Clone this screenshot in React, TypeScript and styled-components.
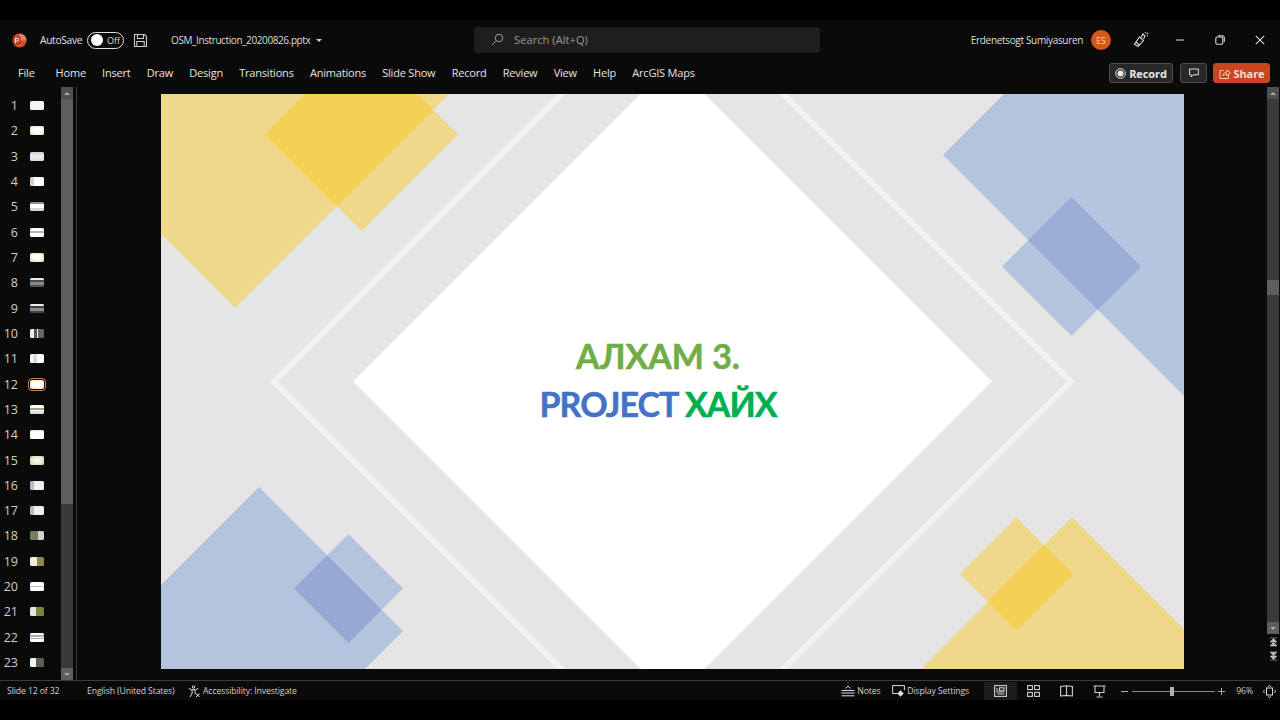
import React from "react";
import styled, { createGlobalStyle } from "styled-components";

const Global = createGlobalStyle`
  html, body { margin: 0; padding: 0; background: #000; }
  body { font-family: "Open Sans", "Noto Sans", sans-serif; overflow: hidden; }
  svg { display: block; flex: none; }
`;

const Page = styled.div`
  width: 1280px; height: 720px; background: #000; padding: 20px 0; box-sizing: border-box;
`;
const Win = styled.div`
  height: 680px; background: #0a0a0a; color: #e6e6e6; display: flex; flex-direction: column;
`;
const TitleBar = styled.header`
  height: 40px; flex: none; display: flex; align-items: center;
`;
const TitleLeft = styled.div`
  width: 474px; flex: none; display: flex; align-items: center; padding-left: 12px; box-sizing: border-box;
`;
const AutoSave = styled.span`
  font-size: 10.2px; margin-left: 13px; color: #e2e2e2; letter-spacing: -0.3px; width: 42px; white-space: nowrap;
`;
const Toggle = styled.span`
  width: 37px; height: 17px; box-sizing: border-box; margin-left: 5px; border: 1.3px solid #e0e0e0; border-radius: 9px;
  display: flex; align-items: center; padding-left: 3px; gap: 4px; font-size: 9px; color: #ddd;
`;
const Knob = styled.span`
  width: 12px; height: 12px; border-radius: 50%; background: #fff;
`;
const SaveBtn = styled.span`
  margin-left: 9px; color: #ccc;
`;
const FileName = styled.span`
  margin-left: 23px; font-size: 10px; color: #dcdcdc; letter-spacing: -0.4px; white-space: nowrap;
`;
const Caret = styled.span`
  margin-left: 6px; width: 0; height: 0; border-left: 3px solid transparent; border-right: 3px solid transparent; border-top: 3px solid #ccc;
`;
const Search = styled.div`
  width: 346px; height: 26px; flex: none; background: #1e1e1e; border-radius: 3px; display: flex; align-items: center;
  padding: 0 0 2px 17px; box-sizing: border-box; color: #9a9a9a; font-size: 11.2px; gap: 10px;
`;
const TitleRight = styled.div`
  flex: 1; display: flex; align-items: center; justify-content: flex-end; min-width: 0;
`;
const UserName = styled.span`
  font-size: 10px; color: #dedede; letter-spacing: -0.33px; white-space: nowrap;
`;
const Avatar = styled.span`
  width: 20px; height: 20px; border-radius: 50%; background: #d15a16; color: #f4d8c4; font-size: 8.5px;
  display: flex; align-items: center; justify-content: center; margin: 0 20px 0 8px;
`;
const WinBtn = styled.span`
  width: 40px; display: flex; justify-content: center; color: #ddd;
`;
const PenSlot = styled.span`
  width: 20px; display: flex; justify-content: center; margin-right: 9px; color: #ddd;
`;
const Ribbon = styled.nav`
  height: 27px; flex: none; display: flex; align-items: center; padding: 0 10px 1px 18px; box-sizing: border-box;
`;
const Tab = styled.span<{ $file?: boolean }>`
  font-size: 11px; letter-spacing: -0.2px; color: #e4e4e4; margin: 0 ${(p) => (p.$file ? 21 : 16.2)}px 2px 0; white-space: nowrap;
`;
const RibbonActions = styled.div`
  margin-left: auto; display: flex; align-items: center; gap: 7px;
`;
const ActionBtn = styled.span<{ $w: number }>`
  height: 20px; width: ${(p) => p.$w}px; box-sizing: border-box; border: 1px solid #4f4f4f; background: #282828; border-radius: 3px;
  display: flex; align-items: center; justify-content: center; gap: 3px; font-size: 11px; font-weight: 700; color: #e8e8e8; letter-spacing: -0.1px;
`;
const ShareBtn = styled(ActionBtn)`
  background: #c8451f; border-color: #c8451f; color: #f6dfd6; margin-left: -1px;
`;
const Main = styled.main`
  flex: 1; min-height: 0; display: flex; border-bottom: 1px solid #3c3c3c;
`;
const Sidebar = styled.aside`
  width: 77px; flex: none; display: flex; box-sizing: border-box; border-right: 1px solid #3c3c3c;
`;
const SlideList = styled.div`
  width: 61px; flex: none; padding-top: 6px; box-sizing: border-box;
`;
const SlideRow = styled.div`
  height: 25.32px; display: flex; align-items: center;
`;
const SlideNum = styled.span`
  width: 18px; text-align: right; font-size: 12.5px; color: #cfcfcf; flex: none;
`;
const ThumbSlot = styled.span`
  flex: none; display: flex; padding-left: 12px;
`;
const Thumb = styled.span<{ $fill: string; $active?: boolean }>`
  width: 14px; height: 9px; border-radius: 1.5px; background: ${(p) => p.$fill};
  ${(p) => p.$active && "outline: 1.5px solid #c4796a; outline-offset: 1px; border-radius: 2px;"}
`;
const ScrollTrack = styled.div`
  width: 12px; flex: none; background: #3a3a3a; display: flex; flex-direction: column;
`;
const ScrollBtn = styled.span<{ $up?: boolean; $tone?: string }>`
  height: 12px; flex: none; background: ${(p) => p.$tone ?? "#505050"}; display: flex; align-items: center; justify-content: center;
  &::after {
    content: ""; width: 0; height: 0; border-left: 3.5px solid transparent; border-right: 3.5px solid transparent;
    ${(p) => (p.$up ? "border-bottom: 3px solid #a8a8a8;" : "border-top: 3px solid #a8a8a8;")}
  }
`;
const ScrollThumb = styled.span<{ $h: number; $tone?: string }>`
  height: ${(p) => p.$h}px; flex: none; background: ${(p) => p.$tone ?? "#5e5e5e"};
`;
const ScrollFill = styled.span`
  flex: 1;
`;
const ScrollGap = styled.span<{ $h: number }>`
  height: ${(p) => p.$h}px; flex: none;
`;
const Canvas = styled.section`
  flex: 1; min-width: 0; padding: 7px 0 0 84px; box-sizing: border-box;
`;
const Slide = styled.div`
  width: 1023px; height: 575px; display: grid; background: #e6e5e6;
  & > * { grid-area: 1 / 1; }
`;
const SlideText = styled.div`
  display: flex; flex-direction: column; align-items: center; justify-content: center; padding: 0 29px 4px 0;
  font-family: "Lato", "Open Sans", sans-serif; font-weight: 700; font-size: 34px; line-height: 48px; white-space: nowrap;
  -webkit-text-stroke: 0.5px currentColor;
`;
const Heading = styled.span`
  color: #70ad47;
`;
const SubHeading = styled.span`
  color: #4472c4; letter-spacing: -0.9px;
`;
const Accent = styled.span`
  color: #00b050;
`;
const RightRail = styled.div`
  width: 13px; flex: none; display: flex; flex-direction: column; box-sizing: border-box; padding-right: 1px;
`;
const RailScroll = styled(ScrollTrack)`
  height: 547px; flex: none;
`;
const RailNav = styled.div`
  display: flex; flex-direction: column; align-items: center; gap: 4px; margin-top: 3px; color: #b8b8b8;
`;
const StatusBar = styled.footer`
  height: 18px; margin-top: 1px; flex: none; display: flex; align-items: center; font-size: 8.7px; letter-spacing: -0.12px; color: #d0d0d0; padding-left: 7px; white-space: nowrap;
`;
const StatusItem = styled.span<{ $w?: number }>`
  display: flex; align-items: center; gap: 2px; ${(p) => (p.$w ? `width: ${p.$w}px; flex: none;` : "")}
`;
const StatusRight = styled.div`
  margin-left: auto; display: flex; align-items: center; height: 100%;
`;
const ViewBtn = styled.span<{ $active?: boolean }>`
  width: 33px; height: 100%; display: flex; align-items: center; justify-content: center; color: #cfcfcf;
  background: ${(p) => (p.$active ? "#1d1d1d" : "transparent")};
`;
const Zoom = styled.div`
  display: flex; align-items: center; margin-left: 5px; color: #a8a8a8;
`;
const ZoomTrack = styled.span`
  width: 83px; height: 1px; background: #8a8a8a; margin: 0 3px 0 4px; display: flex; align-items: center; padding-left: 38px; box-sizing: border-box;
`;
const ZoomThumb = styled.span`
  width: 4px; height: 9px; background: #b0b0b0; flex: none;
`;
const ZoomPct = styled.span`
  margin-left: 11px; color: #c8c8c8;
`;
const FitSlot = styled.span`
  margin: 0 4px 0 10px; color: #d8d8d8;
`;

const W = "#f4f4f4";
const thumbs: string[] = [
  W,
  "radial-gradient(#fff 35%, #dcdbb0 100%)",
  "linear-gradient(#cfcfcf, #eee 50%, #d8d8d8)",
  "linear-gradient(90deg, #d4d4d4 0 30%, #fff 30%)",
  "linear-gradient(#8f8fa4 0 22%, #fff 22% 70%, #d4d4d4 70%)",
  "linear-gradient(#fff 30%, #b4b4b4 30% 55%, #fff 55%)",
  "radial-gradient(#fff 35%, #d6d7a0 100%)",
  "linear-gradient(#eee 0 25%, #4c4c4c 25% 45%, #8a8a8a 45% 75%, #555 75%)",
  "linear-gradient(#eee 0 20%, #3e3e3e 20% 40%, #8a8a8a 40% 75%, #444 75%)",
  "linear-gradient(90deg, #eee 0 30%, #555 30% 50%, #eee 50% 60%, #666 60%)",
  "linear-gradient(90deg, #fff 0 20%, #dcdcdc 20% 50%, #fff 50%)",
  "radial-gradient(#fff 35%, #efdca0 100%)",
  "linear-gradient(#fff 0 30%, #a5a58a 30% 50%, #fff 50% 70%, #ddd 70%)",
  "linear-gradient(#f4dede, #fff 25%)",
  "radial-gradient(#f6f6e8 25%, #c9cca6 100%)",
  "linear-gradient(90deg, #bbb 0 30%, #eee 30%)",
  "linear-gradient(90deg, #bbb 0 30%, #eee 30%)",
  "linear-gradient(90deg, #7b7a60 0 60%, #cfcfcf 60%)",
  "linear-gradient(90deg, #f0f0d8 0 50%, #8c8a4c 50%)",
  "linear-gradient(#fff 40%, #b8b8b8 40% 55%, #fff 55%)",
  "linear-gradient(90deg, #e8e8d8 0 45%, #7c8240 45%)",
  "linear-gradient(#fff 25%, #aaa 25% 40%, #fff 40% 60%, #aaa 60% 72%, #fff 72%)",
  "linear-gradient(90deg, #f4f4f4 0 45%, #5e5e55 45%)",
];

const tabs = ["Home", "Insert", "Draw", "Design", "Transitions", "Animations", "Slide Show", "Record", "Review", "View", "Help", "ArcGIS Maps"];

const diamond = (cx: number, cy: number, r: number) =>
  `${cx - r},${cy} ${cx},${cy - r} ${cx + r},${cy} ${cx},${cy + r}`;

const SlideArt = () => (
  <svg width="1023" height="575" viewBox="161 94 1023 575">
    <polygon points={diamond(672.5, 381.5, 398.5)} fill="none" stroke="#f1f1f1" strokeWidth="6" />
    <polygon points={diamond(672.5, 381.5, 319.5)} fill="#fff" />
    <polygon points="161,94 449,94 235,308 161,234" fill="#eed98a" />
    <polygon points={diamond(361.5, 134.5, 96.5)} fill="#eed98a" />
    <polygon points="305.5,94 417.5,94 433.25,109.75 336.75,206.25 265,134.5" fill="#f4d056" />
    <polygon points="1004,94 1184,94 1184,396 943,155" fill="#b5c4de" />
    <polygon points={diamond(1071.5, 266.5, 69.5)} fill="#b5c4de" />
    <polygon points="1071.5,197 1141,266.5 1097.75,309.75 1028.25,240.25" fill="#9aadd5" />
    <polygon points="161,585 259,487 403,631 365,669 161,669" fill="#b5c4de" />
    <polygon points={diamond(348.5, 588.5, 54.5)} fill="#b5c4de" />
    <polygon points="327.25,555.25 381.75,609.75 348.5,643 294,588.5" fill="#95a9d4" />
    <polygon points="1072,517 1184,629 1184,669 921,669" fill="#eed98a" />
    <polygon points={diamond(1016.5, 574, 56.5)} fill="#eed98a" />
    <polygon points="1044,545 1073,574 1016.5,630.5 987.5,601.5" fill="#f4d056" />
  </svg>
);

const PptLogo = () => (
  <svg width="15" height="15" viewBox="0 0 15 15">
    <circle cx="7.5" cy="7.5" r="7" fill="#d2512c" />
    <path d="M7.5 .5a7 7 0 0 1 7 7h-7z" fill="#e9825c" />
    <rect x="1" y="3.5" width="7.5" height="8" rx="1" fill="#b33c1a" />
    <path d="M3.4 10V5.3h1.7a1.4 1.4 0 0 1 0 2.9H4.2" fill="none" stroke="#fff" strokeWidth="1" />
  </svg>
);
const SaveIcon = () => (
  <svg width="15" height="15" viewBox="0 0 15 15" fill="none" stroke="currentColor" strokeWidth="1.1">
    <path d="M1.5 1.5h10l2 2v10h-12z" />
    <path d="M4.5 1.5v4h6v-4M3.8 13.5v-5h7.4v5" />
  </svg>
);
const SearchIcon = () => (
  <svg width="13" height="13" viewBox="0 0 13 13" fill="none" stroke="currentColor" strokeWidth="1">
    <circle cx="8" cy="5" r="3.7" />
    <path d="M5.3 7.7L1 12" />
  </svg>
);
const PenIcon = () => (
  <svg width="16" height="16" viewBox="0 0 16 16" fill="none" stroke="currentColor" strokeWidth="1.1">
    <path d="M1.5 12l5-7 4 3.5-5.500 6z" />
    <path d="M3 10l3.500 3M8 5.500L10 2l2 2-1.500 3M12 1l.5-1M14 4l1-.5M13.500 2l1.500-1" />
  </svg>
);
const MinIcon = () => (
  <svg width="10" height="10" viewBox="0 0 10 10" stroke="currentColor" strokeWidth="1"><path d="M1 5h8" /></svg>
);
const RestoreIcon = () => (
  <svg width="10" height="10" viewBox="0 0 10 10" fill="none" stroke="currentColor" strokeWidth="1.1">
    <rect x=".8" y="2" width="7" height="7.2" rx="1.5" />
    <path d="M3 .7h4.200A2 2 0 0 1 9.300 2.800V7" />
  </svg>
);
const CloseIcon = () => (
  <svg width="10" height="10" viewBox="0 0 10 10" stroke="currentColor" strokeWidth="1.1"><path d="M.8.8l8.400 8.400M9.200.8L.8 9.200" /></svg>
);
const RecordIcon = () => (
  <svg width="11" height="11" viewBox="0 0 11 11"><circle cx="5.500" cy="5.500" r="4.800" fill="none" stroke="#eee" strokeWidth="1" /><circle cx="5.500" cy="5.500" r="3" fill="#eee" /></svg>
);
const CommentIcon = () => (
  <svg width="10" height="10" viewBox="0 0 10 10" fill="none" stroke="#e0e0e0" strokeWidth="1"><path d="M.6 1h8.800v5.800H4L2.200 9V6.800H.6z" /></svg>
);
const ShareIcon = () => (
  <svg width="12" height="11" viewBox="0 0 12 11" fill="none" stroke="#f4cdbd" strokeWidth="1"><path d="M4.500 2.500H1v8h8.500V7" /><path d="M4 7.500C4.500 5 6.500 4 8 4V2l3.500 3L8 7.800V6C6.500 6 5 6.500 4 7.500z" /></svg>
);
const RailTopIcon = () => (
  <svg width="9" height="10" viewBox="0 0 9 10" fill="currentColor"><path d="M1 1h7M4.500 1.500L8 5H1zM4.500 5L8 9H1z" stroke="currentColor" strokeWidth=".6" /></svg>
);
const RailBottomIcon = () => (
  <svg width="9" height="10" viewBox="0 0 9 10" fill="currentColor"><path d="M1 9h7M4.500 8.500L8 5H1zM4.500 5L8 1H1z" stroke="currentColor" strokeWidth=".6" /></svg>
);
const A11yIcon = () => (
  <svg width="13" height="13" viewBox="0 0 13 13" fill="none" stroke="#ddd" strokeWidth="1">
    <circle cx="5.500" cy="2" r="1.200" />
    <path d="M.8 3.500l3 1.200h3.500l3-1.200M4 4.800L4.200 8 2 12M7 4.800V8l1.500 1.500M8 8.500l3.500 3.500M11.500 8.500L8 12" />
  </svg>
);
const NotesIcon = () => (
  <svg width="14" height="12" viewBox="0 0 14 12" fill="none" stroke="#ddd" strokeWidth="1">
    <path d="M4.500 3.500L7 1l2.500 2.500M.5 5.500h13M.5 8h13M.5 10.800h13" />
  </svg>
);
const DisplayIcon = () => (
  <svg width="13" height="12" viewBox="0 0 13 12" fill="none" stroke="#ddd" strokeWidth="1">
    <path d="M5.500 8.500H.6V.6h11.800v4.500" />
    <circle cx="8.500" cy="8.500" r="2" fill="#ddd" />
    <path d="M8.500 5.500v6M5.500 8.500h6" />
  </svg>
);
const NormalIcon = () => (
  <svg width="13" height="12" viewBox="0 0 13 12" fill="none" stroke="currentColor" strokeWidth="1.100">
    <rect x=".6" y=".6" width="11.800" height="10.800" />
    <path d="M3 3v4h7M3.500 9h7" />
    <rect x="5.500" y="2.800" width="4.500" height="3" />
  </svg>
);
const SorterIcon = () => (
  <svg width="13" height="12" viewBox="0 0 13 12" fill="none" stroke="currentColor" strokeWidth="1.100">
    <rect x=".6" y=".6" width="4.800" height="4" /><rect x="7.600" y=".6" width="4.800" height="4" />
    <rect x=".6" y="7.400" width="4.800" height="4" /><rect x="7.600" y="7.400" width="4.800" height="4" />
  </svg>
);
const ReadingIcon = () => (
  <svg width="13" height="12" viewBox="0 0 13 12" fill="none" stroke="currentColor" strokeWidth="1.100">
    <path d="M.6 1.500l5.900-.8 5.900.8v9.500l-5.900-.6-5.900.6zM6.500 1v9.500" />
  </svg>
);
const ShowIcon = () => (
  <svg width="13" height="13" viewBox="0 0 13 13" fill="none" stroke="currentColor" strokeWidth="1.100">
    <path d="M.5 1h12M2 1v6.500h9V1M6.500 7.500v3.500M3.500 12h6" />
  </svg>
);
const MinusGlyph = () => (
  <svg width="7" height="7" viewBox="0 0 7 7" stroke="currentColor"><path d="M0 3.500h7" /></svg>
);
const PlusGlyph = () => (
  <svg width="7" height="7" viewBox="0 0 7 7" stroke="currentColor"><path d="M0 3.500h7M3.500 0v7" /></svg>
);
const FitIcon = () => (
  <svg width="13" height="13" viewBox="0 0 13 13" fill="none" stroke="currentColor" strokeWidth="1">
    <rect x="3.500" y="3" width="6" height="7" />
    <path d="M5 1.500L6.500 .5 8 1.500M5 11.500l1.500 1L8 11.500M1.500 5L.5 6.500l1 1.500M11.500 5l1 1.500-1 1.500" />
  </svg>
);

export default function App() {
  return (
    <Page>
      <Global />
      <Win>
        <TitleBar>
          <TitleLeft>
            <PptLogo />
            <AutoSave>AutoSave</AutoSave>
            <Toggle><Knob />Off</Toggle>
            <SaveBtn><SaveIcon /></SaveBtn>
            <FileName>OSM_Instruction_20200826.pptx</FileName>
            <Caret />
          </TitleLeft>
          <Search><SearchIcon />Search (Alt+Q)</Search>
          <TitleRight>
            <UserName>Erdenetsogt Sumiyasuren</UserName>
            <Avatar>ES</Avatar>
            <PenSlot><PenIcon /></PenSlot>
            <WinBtn><MinIcon /></WinBtn>
            <WinBtn><RestoreIcon /></WinBtn>
            <WinBtn><CloseIcon /></WinBtn>
          </TitleRight>
        </TitleBar>
        <Ribbon>
          <Tab $file>File</Tab>
          {tabs.map((t) => <Tab key={t}>{t}</Tab>)}
          <RibbonActions>
            <ActionBtn $w={64}><RecordIcon />Record</ActionBtn>
            <ActionBtn $w={27}><CommentIcon /></ActionBtn>
            <ShareBtn $w={57}><ShareIcon />Share</ShareBtn>
          </RibbonActions>
        </Ribbon>
        <Main>
          <Sidebar>
            <SlideList>
              {thumbs.map((fill, i) => (
                <SlideRow key={i}>
                  <SlideNum>{i + 1}</SlideNum>
                  <ThumbSlot><Thumb $fill={fill} $active={i === 11} /></ThumbSlot>
                </SlideRow>
              ))}
            </SlideList>
            <ScrollTrack>
              <ScrollBtn $up />
              <ScrollThumb $h={405} />
              <ScrollFill />
              <ScrollBtn $tone="#5e5e5e" />
            </ScrollTrack>
          </Sidebar>
          <Canvas>
            <Slide>
              <SlideArt />
              <SlideText>
                <Heading>АЛХАМ 3.</Heading>
                <SubHeading>PROJECT <Accent>ХАЙХ</Accent></SubHeading>
              </SlideText>
            </Slide>
          </Canvas>
          <RightRail>
            <RailScroll>
              <ScrollBtn $up />
              <ScrollGap $h={181} />
              <ScrollThumb $h={15} />
              <ScrollFill />
              <ScrollBtn $tone="#5e5e5e" />
            </RailScroll>
            <RailNav>
              <RailTopIcon />
              <RailBottomIcon />
            </RailNav>
          </RightRail>
        </Main>
        <StatusBar>
          <StatusItem $w={80}>Slide 12 of 32</StatusItem>
          <StatusItem $w={101}>English (United States)</StatusItem>
          <StatusItem><A11yIcon />Accessibility: Investigate</StatusItem>
          <StatusRight>
            <StatusItem $w={51}><NotesIcon />Notes</StatusItem>
            <StatusItem $w={92}><DisplayIcon />Display Settings</StatusItem>
            <ViewBtn $active><NormalIcon /></ViewBtn>
            <ViewBtn><SorterIcon /></ViewBtn>
            <ViewBtn><ReadingIcon /></ViewBtn>
            <ViewBtn><ShowIcon /></ViewBtn>
            <Zoom>
              <MinusGlyph />
              <ZoomTrack><ZoomThumb /></ZoomTrack>
              <PlusGlyph />
            </Zoom>
            <ZoomPct>96%</ZoomPct>
            <FitSlot><FitIcon /></FitSlot>
          </StatusRight>
        </StatusBar>
      </Win>
    </Page>
  );
}
